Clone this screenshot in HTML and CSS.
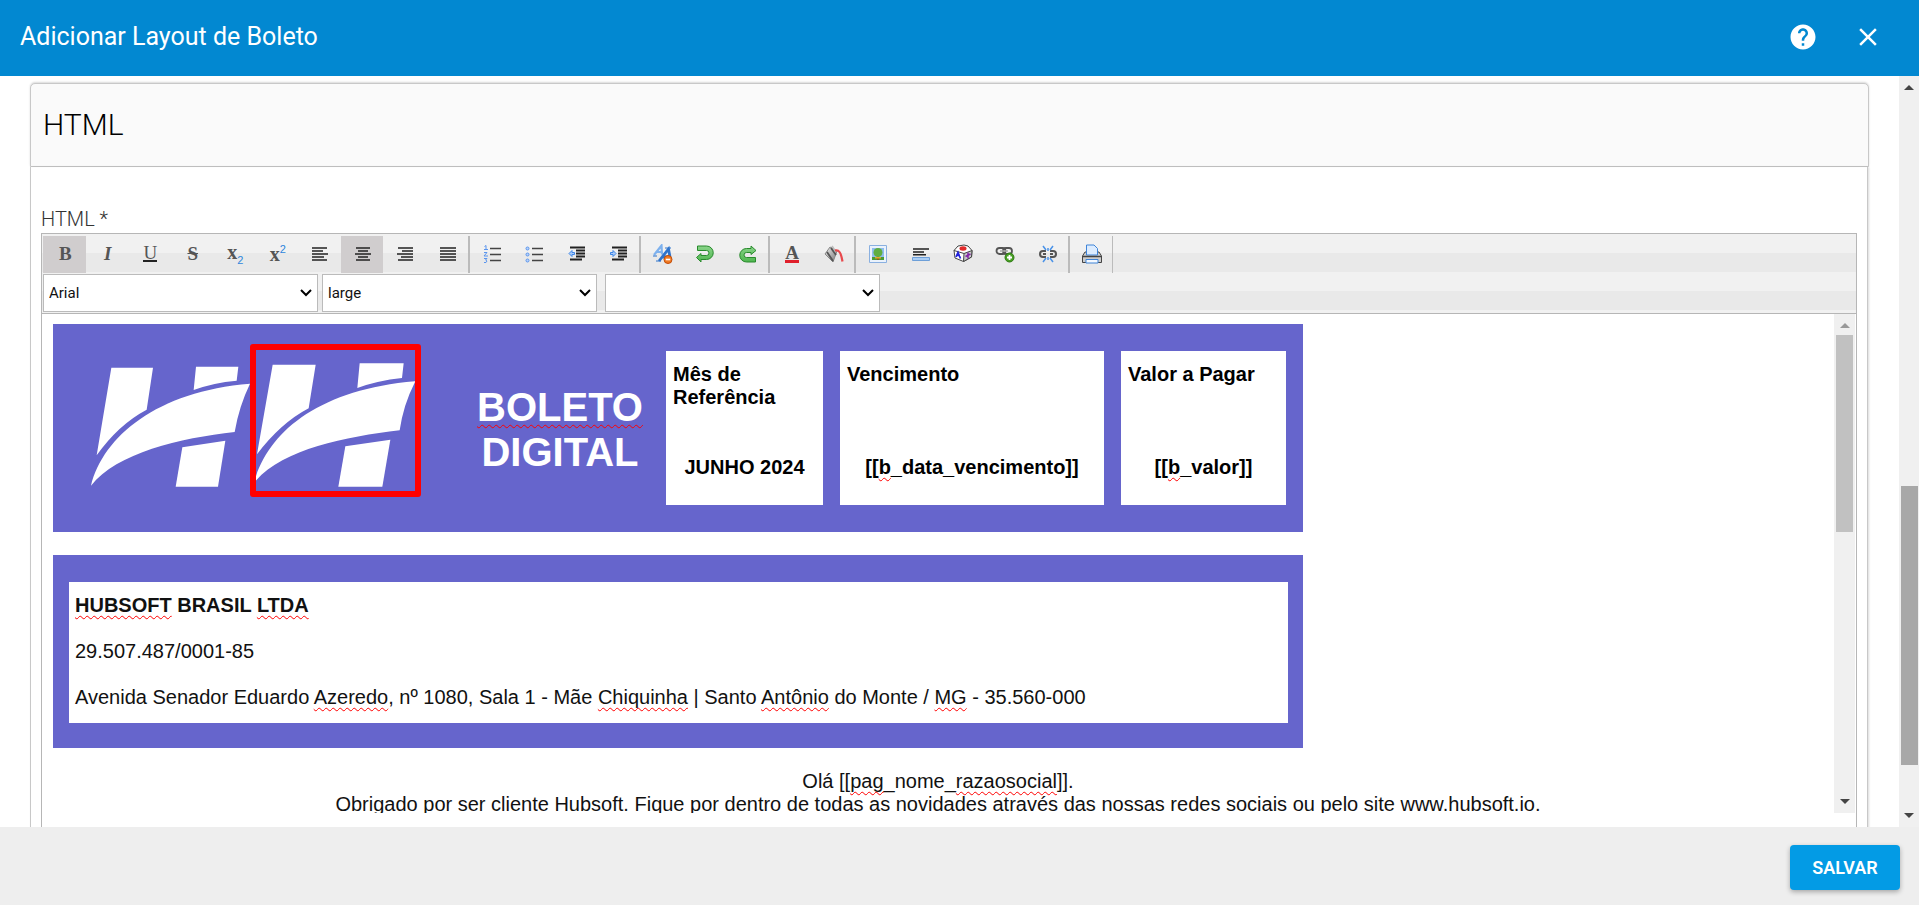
FILE: index.html
```html
<!DOCTYPE html>
<html lang="pt-BR">
<head>
<meta charset="utf-8">
<title>Adicionar Layout de Boleto</title>
<link rel="stylesheet" href="styles.css">
</head>
<body>
<svg class="defs" aria-hidden="true">
  <defs>
    <linearGradient id="leaf" x1="0" y1="0" x2="0" y2="1"><stop offset="0" stop-color="#8ad48a"/><stop offset="1" stop-color="#4fb64f"/></linearGradient>
    <linearGradient id="steel" x1="0" y1="0" x2="1" y2="1"><stop offset="0" stop-color="#eee"/><stop offset="1" stop-color="#777"/></linearGradient>
  </defs>
</svg>
<header class="topbar">
  <h1 class="topbar-title">Adicionar Layout de Boleto</h1>
  <button class="topbar-btn" type="button" aria-label="Ajuda">
    <svg width="30" height="30" viewBox="0 0 24 24"><path fill="#fff" d="M12 2C6.480 2 2 6.480 2 12s4.480 10 10 10 10-4.480 10-10S17.520 2 12 2zm1 17h-2v-2h2v2zm2.070-7.750l-.9.920C13.450 12.900 13 13.500 13 15h-2v-.5c0-1.100.45-2.100 1.170-2.830l1.240-1.260c.37-.36.590-.86.590-1.410 0-1.100-.9-2-2-2s-2 .9-2 2H8c0-2.210 1.790-4 4-4s4 1.790 4 4c0 .88-.36 1.680-.93 2.250z"/></svg>
  </button>
  <button class="topbar-btn" type="button" aria-label="Fechar">
    <svg width="30" height="30" viewBox="0 0 24 24"><path fill="#fff" d="M19 6.410L17.590 5 12 10.590 6.410 5 5 6.410 10.590 12 5 17.590 6.410 19 12 13.410 17.590 19 19 17.590 13.410 12z"/></svg>
  </button>
</header>

<main class="main">
  <section class="panel">
    <h2 class="panel-head">HTML</h2>
    <div class="panel-body">
      <div class="field-label" id="editor-label">HTML *</div>
      <div class="editor">
        <div class="toolbar">
          <div class="tools">
            <div class="group g10">
              <button type="button" class="tool on" aria-label="Negrito"><b class="glyph">B</b></button>
              <button type="button" class="tool" aria-label="Itálico"><b class="glyph"><i>I</i></b></button>
              <button type="button" class="tool" aria-label="Sublinhado"><span class="glyph under">U</span></button>
              <button type="button" class="tool" aria-label="Tachado"><b class="glyph"><s>S</s></b></button>
              <button type="button" class="tool" aria-label="Subscrito"><b class="glyph small">x<sub>2</sub></b></button>
              <button type="button" class="tool" aria-label="Sobrescrito"><b class="glyph small">x<sup>2</sup></b></button>
              <button type="button" class="tool" aria-label="Alinhar à esquerda"><svg width="16" height="14" viewBox="0 0 16 14"><path stroke="#222" stroke-width="1.500" d="M0 1h15M0 4h11M0 7h16M0 10h12M0 13h15"/></svg></button>
              <button type="button" class="tool on" aria-label="Centralizar"><svg width="16" height="14" viewBox="0 0 16 14"><path stroke="#222" stroke-width="1.500" d="M1 1h14M3 4h10M0 7h16M3 10h10M1 13h14"/></svg></button>
              <button type="button" class="tool" aria-label="Alinhar à direita"><svg width="16" height="14" viewBox="0 0 16 14"><path stroke="#222" stroke-width="1.500" d="M1 1h15M5 4h11M0 7h16M4 10h12M1 13h15"/></svg></button>
              <button type="button" class="tool" aria-label="Justificar"><svg width="16" height="14" viewBox="0 0 16 14"><path stroke="#222" stroke-width="1.500" d="M0 1h16M0 4h16M0 7h16M0 10h16M0 13h16"/></svg></button>
            </div>
            <div class="group g4">
              <button type="button" class="tool" aria-label="Lista numerada"><svg width="18" height="18" viewBox="0 0 18 18"><path stroke="#444" stroke-width="1.300" d="M7 3.500h11M7 9.500h11M7 15.500h11"/><path fill="none" stroke="#5a95ee" d="M1.500 1.500l1.500-1v4M1 4.500h4M1 7.500h3l-3 3.500h4M1 13.500h3l-1.500 1.500 1.500 1-1 1.500H1"/></svg></button>
              <button type="button" class="tool" aria-label="Lista com marcadores"><svg width="18" height="18" viewBox="0 0 18 18"><path stroke="#444" stroke-width="1.300" d="M7 3.500h11M7 9.500h11M7 15.500h11"/><g fill="#b9d2f8" stroke="#5a95ee"><circle cx="2.500" cy="3.500" r="1.500"/><circle cx="2.500" cy="9.500" r="1.500"/><circle cx="2.500" cy="15.500" r="1.500"/></g></svg></button>
              <button type="button" class="tool" aria-label="Diminuir recuo"><svg width="18" height="16" viewBox="0 0 18 16"><path stroke="#222" stroke-width="1.900" d="M2 1.500h15M8 4.500h9M8 7.500h9M8 10.500h9M2 13.500h12"/><path fill="#a9cbfa" stroke="#3d86e8" d="M1 7.500l3-3v2h2.500v2H4v2z"/></svg></button>
              <button type="button" class="tool" aria-label="Aumentar recuo"><svg width="18" height="16" viewBox="0 0 18 16"><path stroke="#222" stroke-width="1.900" d="M2 1.500h15M8 4.500h9M8 7.500h9M8 10.500h9M2 13.500h12"/><path fill="#a9cbfa" stroke="#3d86e8" d="M6 7.500l-3-3v2H.5v2H3v2z"/></svg></button>
            </div>
            <div class="group g3">
              <button type="button" class="tool" aria-label="Remover formatação"><svg width="20" height="20" viewBox="0 0 20 20"><g fill="none" stroke="#3f86da"><path stroke="#7fb2ee" stroke-width="2.200" d="M1 11L8.500 1.500l.5 9M4 8h5.500"/><path stroke="#2f74cc" stroke-width="2.800" d="M6 17L15.500 5l1.500 8M9 13h7"/><path stroke="#2f74cc" d="M3 17h5M12 4h6M0 12h4"/></g><circle cx="15" cy="15.500" r="4" fill="#f07a22" stroke="#c24d08"/><path stroke="#fff" stroke-width="1.600" d="M12.800 15.500h4.400"/></svg></button>
              <button type="button" class="tool" aria-label="Desfazer"><svg width="20" height="18" viewBox="0 0 20 18"><path d="M2.500 1h9a6.500 6.500 0 0 1 0 13.500H6v2.500L1.500 12.500 6 8.500v2h5.500a2.500 2.500 0 0 0 0-5h-9z" fill="url(#leaf)" stroke="#288a2c"/></svg></button>
              <button type="button" class="tool" aria-label="Refazer"><svg width="20" height="18" viewBox="0 0 20 18"><path d="M17.500 17h-9a6.500 6.500 0 0 1 0-13.500H13V1l5 4.500L13 9.500v-2H8.500a2.500 2.500 0 0 0 0 5h9z" fill="url(#leaf)" stroke="#288a2c"/></svg></button>
            </div>
            <div class="group g2">
              <button type="button" class="tool" aria-label="Cor do texto"><b class="glyph ink">A</b></button>
              <button type="button" class="tool" aria-label="Cor de fundo"><svg width="20" height="18" viewBox="0 0 20 18"><path d="M1 9L6 2l7 4-4 11z" fill="url(#steel)" stroke="#888"/><path d="M3 7l6 9M7 3l5 7" stroke="#555" stroke-width="1.800"/><path d="M8 1l4 6" stroke="#bbb" stroke-width="1.500"/><path d="M11 5.500c4-1 6 2 7.500 11" fill="none" stroke="#e8494d" stroke-width="2.200"/></svg></button>
            </div>
            <div class="group g5">
              <button type="button" class="tool" aria-label="Imagem"><svg width="18" height="18" viewBox="0 0 18 18"><path fill="#eaf2fc" stroke="#8ab0e0" d="M.5.5h17v17H.5z"/><path fill="#8fbdf0" d="M3 3h12v12H3z"/><path fill="#4a9b35" d="M3 12h12v3H3z"/><path fill="#8a5a20" d="M8 10h2v5H8z"/><circle cx="9" cy="7.500" r="4.500" fill="#5fae42"/><path fill="#e5a52c" d="M6 12h6v1.500H6z"/></svg></button>
              <button type="button" class="tool" aria-label="Linha horizontal"><svg width="18" height="14" viewBox="0 0 18 14"><path stroke="#222" stroke-width="1.400" d="M1 2h16M1 5h11M1 7.700h13"/><path fill="#a9cdf5" stroke="#6d9fd8" d="M.5 10.500h17v3H.5z"/></svg></button>
              <button type="button" class="tool" aria-label="Símbolo"><svg width="20" height="20" viewBox="0 0 20 20"><path fill="#fff" stroke="#444" d="M1 6.500L5 2l6-1 4 1 4 4.500-.5 6.500-8 4.500L2 14z"/><path fill="#c8c8c8" stroke="#444" d="M11 9.500l8-3-.5 6.500-8 4.500z"/><path d="M1 6.500l10 3" stroke="#444"/><ellipse cx="10" cy="4.500" rx="3.500" ry="2.200" fill="#e22b2b"/><path d="M3 13l2-4.500 2.500 6M4 11.500h3" fill="none" stroke="#2222dd" stroke-width="1.700"/><path d="M12.500 12.500l5-2.500M15 8.500v6" stroke="#8322a8" stroke-width="1.500"/></svg></button>
              <button type="button" class="tool" aria-label="Inserir link"><svg width="20" height="18" viewBox="0 0 20 18"><g fill="none" stroke="#555" stroke-width="1.800"><rect x="1.500" y="3" width="9" height="6" rx="3"/><rect x="8" y="3" width="9" height="6" rx="3"/></g><path d="M5 6h8" stroke="#aaa" stroke-width="1.500"/><circle cx="14.500" cy="12.500" r="4.500" fill="#479e23" stroke="#2d7a12"/><path d="M12 12.500h5M14.500 10v5" stroke="#fff" stroke-width="1.800"/></svg></button>
              <button type="button" class="tool" aria-label="Remover link"><svg width="20" height="18" viewBox="0 0 20 18"><g fill="none" stroke="#555" stroke-width="2"><path d="M8 6H5a3 3 0 0 0 0 6h3M12 6h3a3 3 0 0 1 0 6h-3M5 9h3M12 9h3"/></g><path d="M10 3v3M5 1l3 4M15 1l-3 4M10 15v-3M5 17l3-4M15 17l-3-4" fill="none" stroke="#4a92e8" stroke-width="1.500"/></svg></button>
            </div>
            <div class="group g1">
              <button type="button" class="tool" aria-label="Imprimir"><svg width="20" height="20" viewBox="0 0 20 20"><path d="M3 8h14l2.500 4v6.500H.5V12z" fill="#ccc" stroke="#444"/><path d="M4.500 11V1H12l3.500 3.500V11z" fill="#dcecff" stroke="#3f84d8"/><path d="M1 12.500h18" stroke="#444" stroke-width="1.500"/><path d="M4 15.500h12v3.500H4z" fill="#f4f9ff" stroke="#3f84d8"/></svg></button>
            </div>
          </div>
          <div class="picks">
            <select class="pick" aria-label="Fonte"><option>Arial</option></select>
            <select class="pick" aria-label="Tamanho"><option>large</option></select>
            <select class="pick apart" aria-label="Formato"><option></option></select>
          </div>
        </div>

        <div class="doc-row">
          <div class="doc" role="textbox" aria-labelledby="editor-label">
            <div class="banner">
              <div class="logos">
                <svg class="logo" width="159" height="124" viewBox="153 160 477 372" preserveAspectRatio="none"><g fill="#fff"><path d="M214 174H339L320 300Q235 345 170 437z"/><path d="M468 171H595L590 213Q520 219 461 241z"/><path d="M630 222Q597 290 584 367C420 385 230 430 153 528C190 380 350 245 630 222z"/><path d="M427 413L556 393 534 531H407z"/></g></svg>
                <div class="marked">
                  <svg width="159" height="124" viewBox="646 160 477 372" preserveAspectRatio="none"><g fill="#fff"><path d="M696 165H825L804 296Q720 340 649 434z"/><path d="M957 161H1089L1084 205Q1010 213 950 235z"/><path d="M1124 215Q1088 285 1077 362C910 382 720 420 640 520C680 370 830 240 1124 215z"/><path d="M914 410L1049 390 1025 531H893z"/></g></svg>
                </div>
              </div>
              <div class="slogan"><span class="typo">BOLETO</span><br>DIGITAL</div>
              <div class="card"><div>Mês de Referência</div><div class="value">JUNHO 2024</div></div>
              <div class="card"><div>Vencimento</div><div class="value">[[<span class="typo">b</span>_data_vencimento]]</div></div>
              <div class="card"><div>Valor a Pagar</div><div class="value">[[<span class="typo">b</span>_valor]]</div></div>
            </div>
            <div class="company">
              <div class="company-box">
                <p><b><span class="typo">HUBSOFT</span> BRASIL <span class="typo">LTDA</span></b></p>
                <p>29.507.487/0001-85</p>
                <p>Avenida Senador Eduardo <span class="typo">Azeredo</span>, nº 1080, Sala 1 - Mãe <span class="typo">Chiquinha</span> | Santo <span class="typo">Antônio</span> do Monte / <span class="typo">MG</span> - 35.560-000</p>
              </div>
            </div>
            <div class="greeting">Olá [[<span class="typo">pag</span>_nome_<span class="typo">razaosocial</span>]].<br>Obrigado por ser cliente Hubsoft. Fique por dentro de todas as novidades através das nossas redes sociais ou pelo site www.hubsoft.io.</div>
          </div>
          <div class="scroll inner" aria-hidden="true">
            <span class="arrow up"></span><span class="thumb"></span><span class="arrow down"></span>
          </div>
        </div>
      </div>
    </div>
  </section>
  <div class="scroll outer" aria-hidden="true">
    <span class="arrow up"></span><span class="thumb"></span><span class="arrow down"></span>
  </div>
</main>

<footer class="footer"><button class="save" type="button">SALVAR</button></footer>
</body>
</html>
```
FILE: styles.css
```css
* { box-sizing: border-box; }

body {
  margin: 0;
  height: 100vh;
  display: flex;
  flex-direction: column;
  overflow: hidden;
  background: #fff;
  font-family: Roboto, "Liberation Sans", sans-serif;
}

button { font: inherit; border: 0; padding: 0; background: none; cursor: pointer; }
svg { display: block; }
.defs { position: absolute; width: 0; height: 0; }

/* Top bar */
.topbar {
  flex: none;
  display: flex;
  align-items: center;
  height: 76px;
  padding: 0 36px 3px 20px;
  gap: 35px;
  background: #0288d1;
  color: #fff;
}
.topbar-title { flex: 1; margin: 0; font-size: 25px; font-weight: 400; }

/* Scrolling area */
.main { flex: 1; min-height: 0; display: flex; overflow: hidden; }
.panel { flex: 1; min-width: 0; padding: 7px 30px 0; }
.panel-head {
  margin: 0;
  height: 84px;
  padding: 0 12px;
  line-height: 82px;
  border: 1px solid #c8c8c8;
  border-radius: 5px 5px 0 0;
  background: #fafafa;
  box-shadow: 0 -1px 2px rgba(0, 0, 0, .15);
  font-size: 30px;
  font-weight: 300;
  color: #000;
}
.panel-body {
  margin-right: 1px;
  padding: 39px 10px 0;
  border: solid #c8c8c8;
  border-width: 0 1px;
  box-shadow: 1px 0 2px rgba(0, 0, 0, .15);
}
.field-label { height: 27px; line-height: 26px; font-size: 20px; font-weight: 300; color: #333; }

/* Editor */
.editor { border: 1px solid #b6b6b6; height: 640px; }
.toolbar {
  padding: 2px 1px 1px;
  border-bottom: 1px solid #b6b6b6;
  background: repeating-linear-gradient(#f1f1f1 0 19px, #e9e9e9 19px 38px);
}
.tools { display: flex; height: 37px; }
.group { display: flex; border-right: 2px solid #bbb; }
.g10 { width: 427px; }
.g4 { width: 171px; }
.g3 { width: 129px; }
.g2 { width: 86px; }
.g5 { width: 214px; }
.g1 { width: 43px; border-right-width: 1px; }
.tool { flex: 1; display: flex; align-items: center; justify-content: center; padding: 0 0 2px 2px; }
.tool.on { background: #d0cdce; }
.glyph {
  font-family: "Liberation Serif", serif;
  font-size: 19px;
  line-height: 20px;
  color: #555;
}
.glyph.small { font-size: 20px; }
.glyph sub, .glyph sup { font: 11px "Liberation Sans", sans-serif; color: #2f86dc; }
.under { border-bottom: 2px solid #222; line-height: 15px; }
.ink { border-bottom: 3px solid #e0202c; line-height: 15px; }

.picks { display: flex; gap: 4px; margin-top: 1px; }
.pick {
  width: 275px;
  height: 38px;
  padding: 0 5px;
  border: 1px solid #bbb;
  border-radius: 0;
  appearance: none;
  background: #fff url("data:image/svg+xml,%3Csvg xmlns='http://www.w3.org/2000/svg' width='12' height='8' viewBox='0 0 12 8'%3E%3Cpath d='M1 1l5 5 5-5' fill='none' stroke='%23000' stroke-width='2'/%3E%3C/svg%3E") no-repeat right 5px center;
  font: 15px Roboto, sans-serif;
  color: #111;
}
.pick.apart { margin-left: 4px; }

/* Edited document */
.doc-row { display: flex; height: 499px; padding-right: 1px; }
.doc {
  flex: 1;
  min-width: 0;
  overflow: hidden;
  padding: 10px 11px 0;
  font: 20px/23px "Liberation Sans", Arial, sans-serif;
  color: #111;
}
.typo {
  text-decoration: underline wavy #f00 1px;
  text-decoration-skip-ink: none;
  text-underline-offset: 3px;
}
.banner, .company { max-width: 1250px; background: #6665cc; }
.banner {
  display: grid;
  grid-template-columns: 401px 178px 157px 264px 165px;
  gap: 17px;
  padding: 27px 17px 27px 0;
}
.logos { display: flex; align-items: flex-end; margin-top: -8px; padding: 0 0 8px 38px; }
.logo { margin-bottom: 10px; }
.marked { border: 6px solid #f00; border-radius: 3px; padding: 13px 0 4px; }
.slogan {
  align-self: center;
  padding-top: 4px;
  text-align: center;
  font-size: 40px;
  font-weight: 700;
  line-height: 45px;
  color: #fff;
}
.card {
  display: flex;
  flex-direction: column;
  justify-content: space-between;
  height: 154px;
  padding: 12px 7px 26px;
  background: #fff;
  font-weight: 700;
  color: #000;
}
.value { text-align: center; }
.company { margin-top: 23px; padding: 27px 15px 25px 16px; }
.company-box { background: #fff; padding: 12px 6px 14px; }
.company-box p { margin: 0 0 23px; }
.company-box p:last-child { margin: 0; }
.greeting { margin-top: 22px; text-align: center; }

/* Scrollbars */
.scroll {
  flex: none;
  display: flex;
  flex-direction: column;
  align-items: center;
  background: #f0f0f0;
}
.inner { width: 21px; padding: 9px 0; }
.outer { width: 20px; padding: 9px 0; }
.arrow { border: solid transparent; border-width: 0 5px; }
.arrow.up { border-bottom: 5px solid #444; }
.arrow.down { border-top: 5px solid #444; margin-top: auto; }
.inner .arrow.up { border-bottom-color: #999; }
.thumb { width: 17px; }
.inner .thumb { height: 41%; margin-top: 7px; background: #c1c1c1; }
.outer .thumb { height: 38%; margin-top: 396px; background: #a8a8a8; }

/* Footer */
.footer {
  flex: none;
  display: flex;
  justify-content: flex-end;
  padding: 18px 19px 15px;
  background: #eee;
}
.save {
  width: 110px;
  height: 45px;
  border-radius: 4px;
  background: #039be5;
  box-shadow: 0 2px 5px rgba(0, 0, 0, .3);
  font-size: 18px;
  font-weight: 600;
  color: #fff;
}
```
